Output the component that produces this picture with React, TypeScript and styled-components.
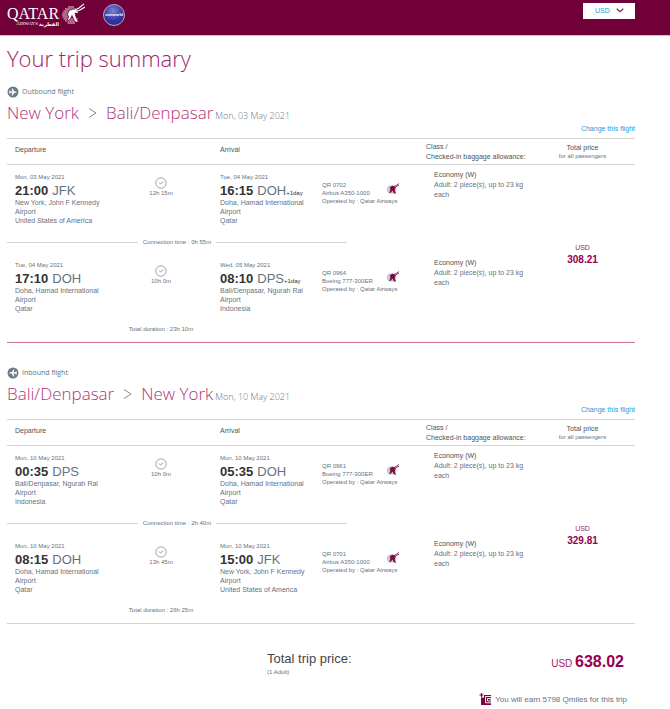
import React from "react";
import styled, { createGlobalStyle } from "styled-components";

const GlobalStyle = createGlobalStyle`
  * { box-sizing: border-box; }
  body {
    margin: 0;
    background: #fff;
    color: #65727f;
    font-family: "Liberation Sans", Arial, sans-serif;
    font-size: 7px;
    line-height: 9px;
  }
`;

const display = `"Open Sans", "Noto Sans", sans-serif`;

const TopBar = styled.header`
  display: flex;
  align-items: flex-start;
  justify-content: space-between;
  height: 35px;
  padding: 3px 35px 0 7px;
  background: #700037;
  box-shadow: 0 1px 0 #d9bccb;
`;

const Brands = styled.div`
  display: flex;
  align-items: flex-start;
  gap: 18px;
`;

const BrandLink = styled.a`
  display: flex;
  gap: 2px;
  color: #fff;
  text-decoration: none;
`;

const WordMark = styled.span`
  display: flex;
  flex-direction: column;
  align-items: flex-end;
  padding-top: 4px;
  font-family: "Liberation Serif", serif;
`;

const BrandName = styled.span`
  font-size: 16px;
  line-height: 14px;
`;

const BrandSub = styled.span`
  display: flex;
  gap: 1px;
  font-size: 5px;
  line-height: 6px;
`;

const Arabic = styled.span`
  font-family: "DejaVu Sans", sans-serif;
  font-weight: 700;
`;

const Oneworld = styled.span`
  display: grid;
  place-items: center;
  width: 22px;
  height: 22px;
  margin-top: 1px;
  border: 1px solid #b9a9cd;
  border-radius: 50%;
  background: radial-gradient(circle at 45% 30%, #7d83cf, #3336a0 55%, #20207c);
  color: #fff;
  font-size: 4px;
  font-weight: 700;
  line-height: 6px;
`;

const CurrencyPicker = styled.label`
  position: relative;
  display: block;
  width: 52px;
`;

const CurrencySelect = styled.select`
  display: block;
  width: 100%;
  height: 16px;
  padding: 0 0 0 12px;
  border: 0;
  border-radius: 0;
  appearance: none;
  background: #fff;
  color: #2b9bd3;
  font: 7px/16px "Liberation Sans", Arial, sans-serif;
`;

const PickerArrow = styled.svg`
  position: absolute;
  top: 5px;
  right: 11px;
  pointer-events: none;
`;

const Page = styled.main`
  padding: 0 35px 0 7px;
`;

const Title = styled.h1`
  margin: 0;
  padding-top: 6px;
  color: #a1246b;
  font: 300 22px/34px ${display};
`;

const Journey = styled.section<{ $last?: boolean }>`
  padding-top: ${(p) => (p.$last ? 24 : 11)}px;
`;

const Direction = styled.p`
  display: flex;
  align-items: center;
  gap: 3px;
  height: 12px;
  margin: 0;
  font: 7px/12px ${display};
`;

const Route = styled.h2`
  display: flex;
  align-items: baseline;
  height: 20px;
  margin: 5px 0 0;
  color: #b03578;
  font: 300 17px/20px ${display};
`;

const RouteArrow = styled.svg`
  margin: 0 9px;
`;

const RouteDate = styled.span`
  margin-left: 2px;
  color: #6d7883;
  font-size: 9px;
`;

const LinkRow = styled.div`
  display: flex;
  justify-content: flex-end;
  height: 15px;
`;

const ChangeLink = styled.a`
  color: #1f9ad6;
  line-height: 12px;
  text-decoration: none;
`;

const FlightTable = styled.table<{ $accent?: boolean }>`
  width: 100%;
  table-layout: fixed;
  border-collapse: separate;
  border-spacing: 0;
  border-bottom: 1px solid ${(p) => (p.$accent ? "#c9709c" : "#d5d5d5")};

  th, td { padding: 0; text-align: left; vertical-align: top; font-weight: 400; }
`;

const Col = styled.col<{ $w: number }>`
  width: ${(p) => p.$w}px;
`;

const Head = styled.th<{ $kind?: "wide" | "price" }>`
  && {
    height: 27px;
    padding-left: ${(p) => (p.$kind ? 0 : 8)}px;
    padding-bottom: ${(p) => (p.$kind ? 0 : 4)}px;
    border-top: 1px solid #d5d5d5;
    border-bottom: 1px solid #d5d5d5;
    vertical-align: middle;
    text-align: ${(p) => (p.$kind === "price" ? "center" : "left")};
    color: #4d5358;
    line-height: ${(p) => (p.$kind === "wide" ? 10 : 9)}px;
    white-space: nowrap;
  }
`;

const Note = styled.small`
  display: block;
  color: #65727f;
  font-size: 6px;
  line-height: 8px;
`;

const PlaceCell = styled.td`
  && { padding: 8px 0 8px 8px; }
`;

const Small = styled.div`
  font-size: 6px;
  line-height: 8px;
  white-space: nowrap;
`;

const Time = styled.div`
  display: flex;
  align-items: baseline;
  gap: 4px;
  height: 14px;
  margin-top: 3px;
  font-size: 13px;
  line-height: 14px;
  white-space: nowrap;
`;

const Clock = styled.b`
  color: #333;
`;

const DayShift = styled.span`
  margin-left: -4px;
  color: #333;
  font-size: 6px;
`;

const DurationCell = styled.td`
  && { padding-top: 12px; text-align: center; }
  font-size: 6px;
  line-height: 8px;
  svg { display: block; margin: 0 auto; }
`;

const PlaneCell = styled.td`
  && { padding: 16px 0 0 7px; }
`;

const PlaneInfo = styled.div`
  display: grid;
  grid-template-columns: 64px 14px;
  svg { grid-column: 2; grid-row: 1 / span 2; align-self: center; }
`;

const Operator = styled(Small)`
  grid-column: 1 / -1;
`;

const ClassCell = styled.td`
  && { padding: 5px 0 0 8px; line-height: 10px; }
`;

const ClassName = styled.div`
  color: #4d5358;
`;

const PriceCell = styled.td`
  && { text-align: center; vertical-align: middle; }
  color: #a1246b;
  line-height: 12px;
`;

const Price = styled.b`
  display: block;
  color: #96004f;
  font-size: 10px;
`;

const Connection = styled.div`
  display: flex;
  align-items: center;
  gap: 5px;
  width: 65%;
  height: 20px;
  padding-bottom: 1px;
  font-size: 6px;
  white-space: nowrap;
  &::before, &::after { content: ""; flex: 1; border-top: 1px solid #d5d5d5; }
`;

const TotalDuration = styled.td`
  && { padding-bottom: 4px; text-align: center; }
  font-size: 6px;
  line-height: 17px;
`;

const TripTotal = styled.section`
  display: flex;
  align-items: center;
  justify-content: space-between;
  margin-top: 26px;
  padding: 0 11px 0 260px;
`;

const TotalLabel = styled.h2`
  margin: 0;
  color: #444;
  font-size: 13px;
  font-weight: 400;
  line-height: 18px;
`;

const TotalAmount = styled.div`
  color: #a1246b;
  font-size: 10px;
  line-height: 20px;
  b { color: #96004f; font-size: 16px; }
`;

const Miles = styled.p`
  display: flex;
  align-items: center;
  justify-content: flex-end;
  gap: 3px;
  margin: 17px 0 0;
  padding-right: 8px;
  font-size: 8px;
  line-height: 13px;
`;

const OryxMark = () => (
  <svg width="24" height="23" viewBox="0 0 24 23" aria-hidden="true" fill="none">
    <path
      d="M7 4H13M4 6H15M2.500 8H10M1.500 10H8M1 12H7M1.500 14H7M2.500 16H17M4 18H16M6.500 20H14"
      stroke="#e6cfdb"
      strokeWidth="1.200"
    />
    <path
      d="M8 7.500 12 6 15 6.500 17.500 9.500 16 10.500 14 10 15 14 17.500 19H14L11 12.500 9.500 16 6 18.500 7.500 14 6.500 11Z"
      fill="#fff"
      stroke="#700037"
      strokeWidth=".8"
    />
    <path d="M13 7.500 18 5 23 .8M14.500 8.500 19 7 24 4" stroke="#fff" strokeWidth="1.100" />
  </svg>
);

const OryxBadge = () => (
  <svg width="14" height="14" viewBox="0 0 14 14" role="img" aria-label="Qatar Airways" fill="none">
    <ellipse cx="5.500" cy="7.500" rx="4.800" ry="4.300" fill="#c3c9ce" />
    <path d="M4 5 6.500 3.800 8.500 4.200 10 6 9 6.800 8.800 9 10.200 11.500H8L6.500 8.500 5 10.500 3 11 4.300 8.500Z" fill="#7d0a42" />
    <path d="M7.500 4.800 10 3.600 13 1.500M8.500 5.500 13 3.200" stroke="#8f2456" strokeWidth=".9" />
  </svg>
);

const PlaneDot = ({ inbound }: { inbound?: boolean }) => (
  <svg width="12" height="12" viewBox="0 0 12 12" aria-hidden="true">
    <circle cx="6" cy="6" r="5.500" fill="#6d7a86" />
    <path
      transform={inbound ? "rotate(180 6 6)" : undefined}
      d="M2 4.500h1l1 1h1.500L4.500 2.500h1L7.500 5.500h1.500a.6.6 0 010 1.200H7.500L5.500 9.500h-1L5.500 6.700H4L3 7.500H2L2.500 6Z"
      fill="#fff"
    />
  </svg>
);

const ClockIcon = () => (
  <svg width="12" height="12" viewBox="0 0 12 12" aria-hidden="true" fill="none" stroke="#87929b">
    <circle cx="6" cy="6" r="5.200" strokeWidth=".8" />
    <path d="M4 5.500 5.500 7 8.500 4.500" strokeWidth=".9" />
  </svg>
);

const WalletIcon = () => (
  <svg width="13" height="13" viewBox="0 0 13 13" aria-hidden="true" fill="none" stroke="#7c0740">
    <path d="M2.500 0v4M.5 2h4" strokeWidth="1.200" />
    <path d="M2 4.500H5V2H12V12H2Z" fill="#7c0740" stroke="none" />
    <path d="M12.500 3.500H6.500V9.800H12.500" stroke="#fff" strokeWidth=".9" />
    <path d="M8.500 5.500H12V8H8.500Z" fill="#7c0740" stroke="#fff" strokeWidth=".9" />
  </svg>
);

type Stop = { date: string; time: string; code: string; plus?: boolean; place: string; country: string };
type Leg = { from: Stop; to: Stop; duration: string; flight: string; plane: string };
type JourneyData = {
  inbound?: boolean;
  from: string;
  to: string;
  date: string;
  price: string;
  connection: string;
  total: string;
  legs: [Leg, Leg];
};

const DOHA = { code: "DOH", place: "Doha, Hamad International Airport", country: "Qatar" };
const BALI = { code: "DPS", place: "Bali/Denpasar, Ngurah Rai Airport", country: "Indonesia" };
const JFK = { code: "JFK", place: "New York, John F Kennedy Airport", country: "United States of America" };

const journeys: JourneyData[] = [
  {
    from: "New York",
    to: "Bali/Denpasar",
    date: "Mon, 03 May 2021",
    price: "308.21",
    connection: "0h 55m",
    total: "23h 10m",
    legs: [
      {
        from: { ...JFK, date: "Mon, 03 May 2021", time: "21:00" },
        to: { ...DOHA, date: "Tue, 04 May 2021", time: "16:15", plus: true },
        duration: "12h 15m",
        flight: "QR 0702",
        plane: "Airbus A350-1000",
      },
      {
        from: { ...DOHA, date: "Tue, 04 May 2021", time: "17:10" },
        to: { ...BALI, date: "Wed, 05 May 2021", time: "08:10", plus: true },
        duration: "10h 0m",
        flight: "QR 0964",
        plane: "Boeing 777-300ER",
      },
    ],
  },
  {
    inbound: true,
    from: "Bali/Denpasar",
    to: "New York",
    date: "Mon, 10 May 2021",
    price: "329.81",
    connection: "2h 40m",
    total: "26h 25m",
    legs: [
      {
        from: { ...BALI, date: "Mon, 10 May 2021", time: "00:35" },
        to: { ...DOHA, date: "Mon, 10 May 2021", time: "05:35" },
        duration: "10h 0m",
        flight: "QR 0961",
        plane: "Boeing 777-300ER",
      },
      {
        from: { ...DOHA, date: "Mon, 10 May 2021", time: "08:15" },
        to: { ...JFK, date: "Mon, 10 May 2021", time: "15:00" },
        duration: "13h 45m",
        flight: "QR 0701",
        plane: "Airbus A350-1000",
      },
    ],
  },
];

const Place = ({ stop }: { stop: Stop }) => (
  <PlaceCell>
    <Small>{stop.date}</Small>
    <Time>
      <Clock>{stop.time}</Clock>
      <span>{stop.code}</span>
      {stop.plus && <DayShift>+1day</DayShift>}
    </Time>
    <div>{stop.place}</div>
    <div>{stop.country}</div>
  </PlaceCell>
);

const LegRow = ({ leg, price }: { leg: Leg; price?: string }) => (
  <tr>
    <Place stop={leg.from} />
    <DurationCell>
      <ClockIcon />
      {leg.duration}
    </DurationCell>
    <Place stop={leg.to} />
    <PlaneCell>
      <PlaneInfo>
        <Small>{leg.flight}</Small>
        <Small>{leg.plane}</Small>
        <OryxBadge />
        <Operator>Operated by : Qatar Airways</Operator>
      </PlaneInfo>
    </PlaneCell>
    <ClassCell>
      <ClassName>Economy (W)</ClassName>
      Adult: 2 piece(s), up to 23 kg each
    </ClassCell>
    {price && (
      <PriceCell rowSpan={4}>
        USD
        <Price>{price}</Price>
      </PriceCell>
    )}
  </tr>
);

const JourneySection = ({ data }: { data: JourneyData }) => (
  <Journey $last={data.inbound}>
    <Direction>
      <PlaneDot inbound={data.inbound} />
      {data.inbound ? "Inbound flight" : "Outbound flight"}
    </Direction>
    <Route>
      {data.from}
      <RouteArrow width="9" height="12" viewBox="0 0 9 12" fill="none" stroke="#7f8a94" role="img" aria-label="to">
        <path d="M1 1.500 8 6 1 10.500" />
      </RouteArrow>
      {data.to}
      <RouteDate>{data.date}</RouteDate>
    </Route>
    <LinkRow>
      <ChangeLink href="#change">Change this flight</ChangeLink>
    </LinkRow>
    <FlightTable $accent={!data.inbound}>
      <colgroup>
        {[103, 102, 103, 111, 104, 105].map((w, i) => (
          <Col key={i} $w={w} />
        ))}
      </colgroup>
      <thead>
        <tr>
          <Head colSpan={2}>Departure</Head>
          <Head colSpan={2}>Arrival</Head>
          <Head $kind="wide">
            Class /<br />
            Checked-in baggage allowance:
          </Head>
          <Head $kind="price">
            Total price
            <Note>for all passengers</Note>
          </Head>
        </tr>
      </thead>
      <tbody>
        <LegRow leg={data.legs[0]} price={data.price} />
        <tr>
          <td colSpan={5}>
            <Connection>Connection time : {data.connection}</Connection>
          </td>
        </tr>
        <LegRow leg={data.legs[1]} />
        <tr>
          <TotalDuration colSpan={3}>Total duration : {data.total}</TotalDuration>
          <td colSpan={2} />
        </tr>
      </tbody>
    </FlightTable>
  </Journey>
);

export default function App() {
  return (
    <>
      <GlobalStyle />
      <TopBar>
        <Brands>
          <BrandLink href="#home">
            <WordMark>
              <BrandName>QATAR</BrandName>
              <BrandSub>
                AIRWAYS <Arabic lang="ar">القطرية</Arabic>
              </BrandSub>
            </WordMark>
            <OryxMark />
          </BrandLink>
          <Oneworld>oneworld</Oneworld>
        </Brands>
        <CurrencyPicker>
          <CurrencySelect aria-label="Currency" defaultValue="USD">
            <option>USD</option>
            <option>EUR</option>
          </CurrencySelect>
          <PickerArrow width="8" height="5" viewBox="0 0 8 5" fill="none" stroke="#8c2457" strokeWidth="1.300" aria-hidden="true">
            <path d="M.7.700 4 3.700 7.300.7" />
          </PickerArrow>
        </CurrencyPicker>
      </TopBar>
      <Page>
        <Title>Your trip summary</Title>
        {journeys.map((j) => (
          <JourneySection key={j.price} data={j} />
        ))}
        <TripTotal>
          <div>
            <TotalLabel>Total trip price:</TotalLabel>
            <Small>(1 Adult)</Small>
          </div>
          <TotalAmount>
            USD <b>638.02</b>
          </TotalAmount>
        </TripTotal>
        <Miles>
          <WalletIcon />
          You will earn 5798 Qmiles for this trip
        </Miles>
      </Page>
    </>
  );
}
